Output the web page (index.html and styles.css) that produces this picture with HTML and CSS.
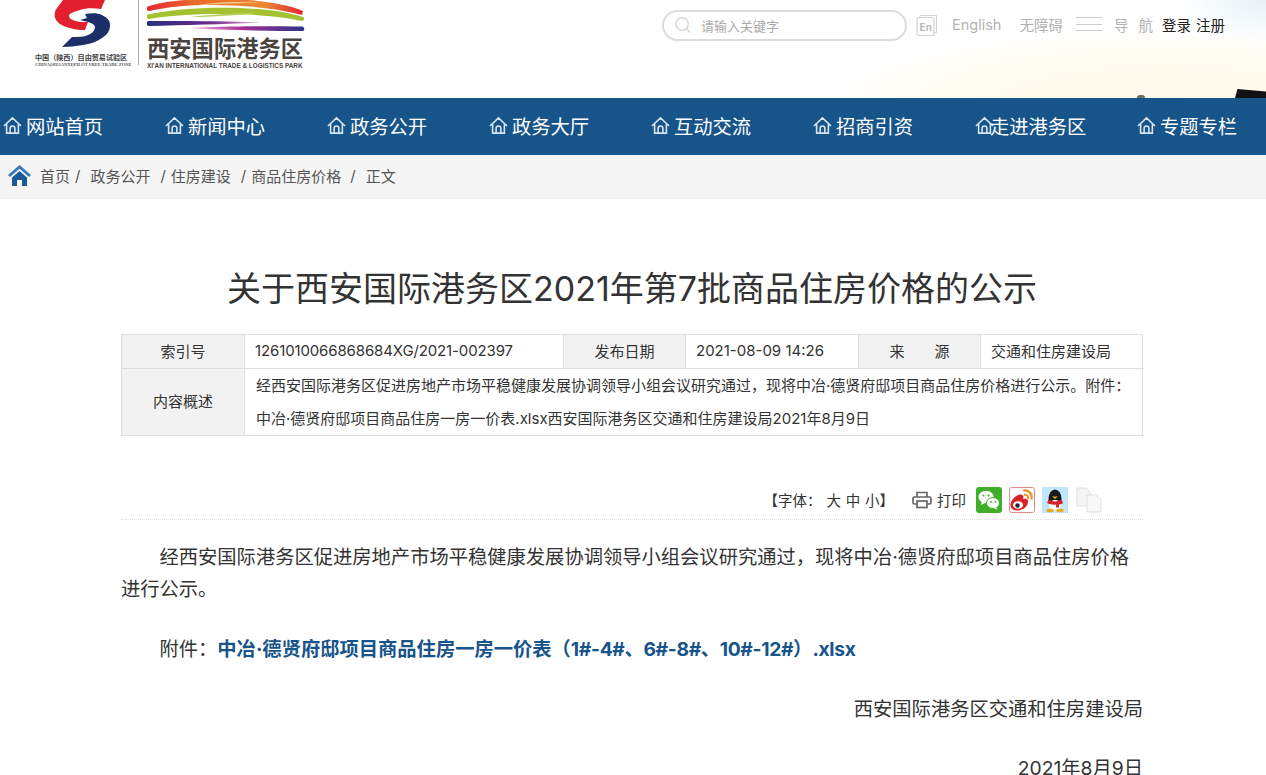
FILE: index.html
```html
<!DOCTYPE html>
<html lang="zh-CN">

<head>
    <meta charset="UTF-8" />
    <meta name="viewport" content="width=device-width, initial-scale=1.0" />
    <title>关于西安国际港务区2021年第7批商品住房价格的公示</title>
    <link rel="stylesheet" href="styles.css">
</head>

<body>
    <svg class="defs" width="0" height="0">
        <defs>
            <linearGradient id="arc-red">
                <stop offset="0" stop-color="#e5262f" />
                <stop offset=".3" stop-color="#ea6a2a" />
                <stop offset=".75" stop-color="#e98a33" />
                <stop offset="1" stop-color="#e5262f" />
            </linearGradient>
            <linearGradient id="arc-blue">
                <stop offset="0" stop-color="#27307f" />
                <stop offset=".55" stop-color="#6a2a8a" />
                <stop offset="1" stop-color="#e7a3cf" />
            </linearGradient>
            <linearGradient id="arc-pink">
                <stop offset="0" stop-color="#eeb4d8" />
                <stop offset=".45" stop-color="#a92f97" />
                <stop offset="1" stop-color="#2b3487" />
            </linearGradient>
        </defs>
        <symbol id="home" viewBox="0 0 20 20">
            <path d="M1 10.500 10 2l9 8.500M3.800 8.500V18H16.200V8.500M7.500 18V13a2.500 2.500 0 0 1 5 0v5" fill="none" stroke="currentColor" stroke-width="1.700" />
        </symbol>
    </svg>

    <header class="top">
        <div class="logo">
            <div class="logo-left">
                <svg class="logo-s" width="62" height="48" viewBox="50 0 62 48">
                    <path d="M63 0H105L101 9C94 8 85 8 80 10 74 12 69 13 69 16 69 19 74 21 80 22L88 22 85 30C76 30 67 28 60 24 54 20 53 13 57 8z" fill="#e21f2e" />
                    <path d="M85 14C92 13 98 13 102 15 108 18 110 21 110 25 110 31 107 35 102 38 96 42 90 44 83 45 76 46 69 47 62 47L72 37C78 37 84 37 88 35 93 33 95 30 95 27 95 25 92 23 88 22L80 20 87 18z" fill="#1c2f68" />
                </svg>
                <div class="logo-cn">中国（陕西）自由贸易试验区</div>
                <div class="logo-en">CHINA(SHAANXI)PILOT FREE TRADE ZONE</div>
            </div>
            <div class="logo-line"></div>
            <div class="logo-right">
                <svg class="logo-arcs" width="158" height="32" viewBox="147 0 158 32">
                    <path d="M148 6.500C172-3 262-6 303 11L302 15C262 4 190 1 149 11 146 11 146 7 148 6.500z" fill="url(#arc-red)" />
                    <path d="M193 6C212 2 242 1 262 3 240 3 214 4 193 6z" fill="#f3c98a" />
                    <path d="M148 14.500C188 5 268 5 303 17 305 18 304 21 302 21 262 12 190 12 149 19 146 19 146 15 148 14.500z" fill="#a3c22f" />
                    <path d="M190 17C214 14 240 13 258 13 240 15 214 17 190 17z" fill="#b7cf5e" />
                    <path d="M149 21C186 21 226 21 260 22.500 226 24 186 25 149 26 146 26 146 21 149 21z" fill="url(#arc-blue)" />
                    <path d="M190 28C222 26 268 26 302 26.500 305 27 305 31 302 31 268 31 222 30 190 28z" fill="url(#arc-pink)" />
                </svg>
                <div class="logo-title">西安国际港务区</div>
                <div class="logo-sub">XI'AN INTERNATIONAL TRADE &amp; LOGISTICS PARK</div>
            </div>
        </div>

        <div class="tools">
            <div class="search">
                <svg width="18" height="18" viewBox="0 0 18 18">
                    <circle cx="8" cy="8" r="6.200" fill="none" stroke="#d4d4d4" stroke-width="1.400" />
                    <path d="M12.500 12.800 16 16.500" stroke="#d4d4d4" stroke-width="1.400" />
                </svg>
                <span>请输入关键字</span>
            </div>
            <svg class="en-icon" width="22" height="23" viewBox="0 0 22 23">
                <path d="M4 3V1.500h16.500v17H18" fill="none" stroke="#d2d2d2" />
                <rect x="1" y="3.500" width="17" height="18" rx="2" fill="#fff" stroke="#d2d2d2" stroke-width="1.200" />
                <text x="3.600" y="17" class="en-text">En</text>
            </svg>
            <a class="tool-en">English</a>
            <a class="tool-link">无障碍</a>
            <span class="burger"></span>
            <a class="tool-link guide">导 航</a>
            <a class="tool-login">登录</a>
            <a class="tool-login">注册</a>
        </div>
        <div class="dot"></div>
        <div class="corner"></div>
    </header>

    <nav class="main-nav">
        <a><svg><use href="#home" /></svg>网站首页</a>
        <a><svg><use href="#home" /></svg>新闻中心</a>
        <a><svg><use href="#home" /></svg>政务公开</a>
        <a><svg><use href="#home" /></svg>政务大厅</a>
        <a><svg><use href="#home" /></svg>互动交流</a>
        <a><svg><use href="#home" /></svg>招商引资</a>
        <a class="tight"><svg><use href="#home" /></svg>走进港务区</a>
        <a><svg><use href="#home" /></svg>专题专栏</a>
    </nav>

    <div class="crumbs">
        <svg width="23" height="21" viewBox="0 0 23 21">
            <path d="M11.500 0 0 10l2 2L11.500 3.800 21 12l2-2z" fill="#3b78bf" />
            <path d="M4 12.500 11.500 6 19 12.500V21h-5v-6H9v6H4z" fill="#1c5a94" />
        </svg>
        <a class="c1">首页</a><i>/</i>
        <a>政务公开</a><i>/</i>
        <a>住房建设</a><i>/</i>
        <a>商品住房价格</a><i class="last">/</i>
        <a>正文</a>
    </div>

    <main class="article">
        <h1>关于西安国际港务区2021年第7批商品住房价格的公示</h1>

        <div class="meta">
            <div class="label">索引号</div>
            <div class="val serial">1261010066868684XG/2021-002397</div>
            <div class="label">发布日期</div>
            <div class="val">2021-08-09 14:26</div>
            <div class="label">来&emsp;&emsp;源</div>
            <div class="val last">交通和住房建设局</div>
            <div class="label bottom">内容概述</div>
            <div class="val wide">经西安国际港务区促进房地产市场平稳健康发展协调领导小组会议研究通过，现将中冶·德贤府邸项目商品住房价格进行公示。附件：中冶·德贤府邸项目商品住房一房一价表.xlsx西安国际港务区交通和住房建设局2021年8月9日</div>
        </div>

        <div class="share">
            <span class="font-size">【字体：<b>大</b><b>中</b><b>小</b>】</span>
            <svg class="printer" width="20" height="18" viewBox="0 0 20 18">
                <path d="M5 6V1.500h10V6M5 13H2.500A1.500 1.500 0 0 1 1 11.500V7.500A1.500 1.500 0 0 1 2.500 6h15A1.500 1.500 0 0 1 19 7.500v4a1.500 1.500 0 0 1-1.500 1.500H15" fill="none" stroke="#666" stroke-width="1.700" />
                <rect x="5" y="10" width="10" height="6.500" fill="none" stroke="#666" stroke-width="1.700" />
            </svg>
            <span class="print">打印</span>
            <svg width="26" height="26" viewBox="0 0 26 26">
                <rect width="26" height="26" rx="3" fill="#3fae2a" />
                <ellipse cx="10" cy="10" rx="7.500" ry="6.200" fill="#fff" />
                <path d="M6 14 5 18l4-2z" fill="#fff" />
                <ellipse cx="17" cy="16" rx="6.500" ry="5.500" fill="#fff" stroke="#3fae2a" />
                <path d="M20 20l1.500 2.500-4-1.500z" fill="#fff" />
                <circle cx="7.500" cy="8.500" r="1" fill="#3fae2a" /><circle cx="12.500" cy="8.500" r="1" fill="#3fae2a" />
                <circle cx="15" cy="15" r=".9" fill="#3fae2a" /><circle cx="19.500" cy="15" r=".9" fill="#3fae2a" />
            </svg>
            <svg width="26" height="26" viewBox="0 0 26 26">
                <rect x=".5" y=".5" width="25" height="25" rx="2" fill="#fff" stroke="#e08a8a" />
                <path d="M1.500 18c0-5 6-10.500 10-10.500 3 0 3.500 2 2.500 4.500 3-1 6 0 5 3.500-1 5-6 8-11 8-4 0-6.500-2-6.500-5.500z" fill="#d8232a" />
                <ellipse cx="9" cy="18" rx="5" ry="3.800" fill="#fff" />
                <circle cx="8.500" cy="18.500" r="2.200" fill="#222" />
                <path d="M14 3.500c5.500-1 9.500 3 8.500 9M15 7.500c3 0 4.500 2 4 4.500" fill="none" stroke="#f0912a" stroke-width="2.200" />
            </svg>
            <svg width="26" height="26" viewBox="0 0 26 26">
                <rect width="26" height="26" fill="#bfe6fa" />
                <ellipse cx="13" cy="11.500" rx="6.500" ry="9" fill="#1a1a1a" />
                <ellipse cx="13" cy="18" rx="6" ry="5" fill="#fff" />
                <path d="M6.500 12.500c4 2.500 9 2.500 13 0l1.500 3.500c-1 1-3 1.500-4 1.500v3h-3v-3c-3 .500-6 0-9-1.500z" fill="#d8232a" />
                <path d="M10 9.500h6l-3 2.500z" fill="#f2a81d" />
                <ellipse cx="8" cy="23.500" rx="3.800" ry="1.800" fill="#f2a81d" />
                <ellipse cx="18" cy="23.500" rx="3.800" ry="1.800" fill="#f2a81d" />
            </svg>
            <svg class="copy" width="26" height="26" viewBox="0 0 26 26">
                <path d="M1 1h9l4 4v14H1z" fill="#f4f4f4" stroke="#e0e0e0" />
                <path d="M11 8h9l5 5v12H11z" fill="#f8f8f8" stroke="#e0e0e0" />
            </svg>
        </div>

        <div class="content">
            <p>经西安国际港务区促进房地产市场平稳健康发展协调领导小组会议研究通过，现将中冶·德贤府邸项目商品住房价格进行公示。</p>
            <p>附件：<a class="attach">中冶·德贤府邸项目商品住房一房一价表（<span>1#-4#、6#-8#、10#-12#</span>）<span>.xlsx</span></a></p>
            <p class="sign">西安国际港务区交通和住房建设局</p>
            <p class="sign">2021年8月9日</p>
        </div>
    </main>
</body>

</html>
```

FILE: styles.css
```css
* {
    box-sizing: border-box;
}

html,
body {
    height: 775px;
    overflow: hidden;
}

body {
    margin: 0;
    font-family: Inter, "Noto Sans CJK SC", sans-serif;
    background: #fff;
    color: #333;
}

.defs {
    position: absolute;
}

/* header */
.top {
    position: relative;
    height: 98px;
    display: flex;
    justify-content: space-between;
    overflow: hidden;
    background:
        radial-gradient(ellipse 90px 45px at 1266px 0, #e9f2f7 0%, rgba(233, 242, 247, 0) 100%),
        radial-gradient(ellipse 340px 70px at 1170px 100px, #fff9ea 0%, #fffcf2 70%, rgba(255, 255, 255, 0) 100%),
        #fff;
}

.dot {
    position: absolute;
    left: 1137px;
    bottom: 0;
    width: 8px;
    height: 3px;
    border-radius: 4px 4px 0 0;
    background: #6a6a5e;
}

.corner {
    position: absolute;
    right: 0;
    bottom: 0;
    width: 31px;
    height: 10px;
    background: #111;
    clip-path: polygon(8% 10%, 100% 35%, 100% 100%, 0 100%);
}

.logo {
    display: flex;
    height: 68px;
    padding-left: 35px;
    align-items: flex-start;
}

.logo-left {
    width: 95px;
}

.logo-s {
    display: block;
    margin-left: 15px;
}

.logo-cn {
    margin-top: 5px;
    font-size: 7.100px;
    line-height: 9px;
    font-weight: bold;
    color: #444;
    white-space: nowrap;
}

.logo-en {
    font-family: "Liberation Serif", serif;
    font-size: 4.500px;
    line-height: 5px;
    font-weight: bold;
    color: #555;
    white-space: nowrap;
}

.logo-line {
    width: 1px;
    height: 65px;
    margin: 0 8px;
    background: #aaa;
}

.logo-arcs {
    display: block;
    margin-bottom: 5px;
}

.logo-title {
    font-size: 22.300px;
    line-height: 24px;
    font-weight: bold;
    color: #4a4340;
    white-space: nowrap;
}

.logo-sub {
    font-family: "Liberation Sans", sans-serif;
    font-size: 7.500px;
    line-height: 9px;
    font-weight: bold;
    color: #4a4340;
    white-space: nowrap;
    transform: scaleX(0.85);
    transform-origin: left center;
}

.tools {
    display: flex;
    align-items: center;
    height: 50px;
    padding-right: 41px;
    font-size: 14.500px;
    color: #b3b3b3;
}

.tools a {
    margin-bottom: 2px;
}

.search {
    display: flex;
    align-items: center;
    width: 245px;
    height: 31px;
    margin-right: 9px;
    padding-left: 10px;
    border: 2px solid #dcdcdc;
    border-radius: 16px;
    background: #fff;
    font-size: 13px;
    color: #aaa;
}

.search span {
    margin-left: 9px;
}

.en-icon {
    margin-right: 14px;
}

.en-text {
    font-size: 10px;
    font-weight: bold;
    fill: #bbb;
}

.tool-en {
    margin-right: 18px;
}

.tool-link {
    margin-right: 13px;
}

.guide {
    word-spacing: 6px;
    margin-left: 12px;
    margin-right: 4px;
}

.burger {
    width: 26px;
    height: 14px;
    margin-bottom: 2px;
    border-top: 1px solid #ccc;
    border-bottom: 1px solid #ccc;
    background: linear-gradient(#ccc, #ccc) center / 100% 1px no-repeat;
}

.tool-login {
    margin-left: 5px;
    color: #222;
}

/* nav */
.main-nav {
    display: flex;
    height: 57px;
    padding-left: 3px;
    padding-bottom: 2px;
    background: #17548a;
    overflow: hidden;
}

.main-nav a {
    flex: 0 0 162px;
    display: flex;
    align-items: center;
    font-size: 19.300px;
    color: #fff;
    white-space: nowrap;
}

.main-nav svg {
    width: 19px;
    height: 19px;
    margin-right: 4px;
    color: #d6e4ef;
}

.main-nav .tight svg {
    margin-right: -4px;
}

.crumbs {
    display: flex;
    align-items: center;
    height: 44px;
    padding: 0 0 2px 8px;
    background: #f5f5f5;
    border-bottom: 1px solid #efefef;
    font-size: 15px;
    color: #555;
}

.crumbs svg {
    margin-right: 9px;
}

.crumbs i {
    font-style: normal;
    margin: 0 5px 0 10px;
}

.crumbs .c1+i {
    margin: 0 10px 0 5px;
}

.crumbs .last {
    margin: 0 10px 0 9px;
}

/* article */
.article {
    width: 1022px;
    margin-left: 121px;
}

h1 {
    margin: 69px 0 24px;
    font-size: 34px;
    line-height: 42px;
    font-weight: normal;
    text-align: center;
    color: #333;
}

.meta {
    display: grid;
    grid-template-columns: 123px 319px 122px 173px 122px 163px;
    border: 1px solid #dedede;
    border-bottom: 0;
    font-size: 15px;
    color: #333;
}

.label {
    display: flex;
    align-items: center;
    justify-content: center;
    height: 34px;
    padding-bottom: 2px;
    background: #f2f2f2;
    border-right: 1px solid #dedede;
    border-bottom: 1px solid #dedede;
}

.label.bottom {
    height: 67px;
    padding-bottom: 3px;
}

.val {
    display: flex;
    align-items: center;
    padding: 0 0 2px 10px;
    border-right: 1px solid #dedede;
    border-bottom: 1px solid #dedede;
}

.val.serial {
    letter-spacing: -0.13px;
}

.val.last {
    border-right: 0;
}

.val.wide {
    display: block;
    grid-column: 2 / 7;
    border-right: 0;
    padding: 0 10px 0 11px;
    line-height: 33px;
}

.share {
    display: flex;
    align-items: center;
    justify-content: flex-end;
    height: 84px;
    padding: 45px 41px 0 0;
    border-bottom: 1px dotted #ddd;
    font-size: 14.500px;
    color: #333;
}

.share span {
    padding-bottom: 2px;
}

.share svg {
    margin-left: 7px;
}

.font-size b {
    font-weight: normal;
    margin-left: 4.800px;
}

.share .printer {
    margin-left: 18px;
}

.share .copy {
    margin-left: 8px;
}

.print {
    margin: 0 3px 0 5px;
}

.content {
    font-size: 19.300px;
    line-height: 32px;
    color: #333;
    padding-top: 21px;
}

.content p {
    margin: 0 0 28px;
    text-indent: 38.500px;
}

.attach {
    font-weight: bold;
    color: #17548a;
}

.attach span {
    letter-spacing: -0.35px;
}

.content .sign {
    margin-bottom: 27px;
    text-align: right;
    text-indent: 0;
}
```
